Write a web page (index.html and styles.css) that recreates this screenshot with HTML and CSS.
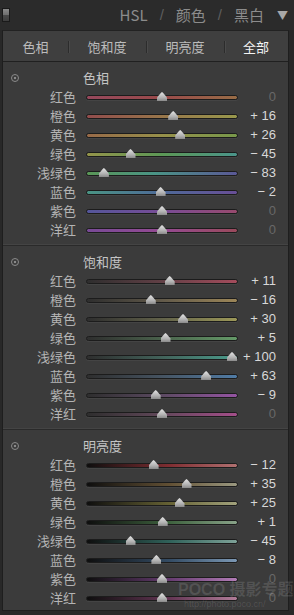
FILE: index.html
```html
<!DOCTYPE html>
<html lang="zh">
<head>
    <meta charset="UTF-8">
    <meta name="viewport" content="width=device-width, initial-scale=1.0">
    <title>HSL</title>
    <link rel="stylesheet" href="styles.css">
</head>
<body>
    <div class="header">
        <div class="toggle"></div>
        <div class="modes">
            <span>HSL</span><span class="slash">/</span><span>颜色</span><span class="slash">/</span><span>黑白</span><span class="arrow">▼</span>
        </div>
    </div>
    <div class="panel">
        <div class="tabs">
            <div class="tab">色相</div>
            <div class="tab">饱和度</div>
            <div class="tab">明亮度</div>
            <div class="tab active">全部</div>
        </div>

        <!-- 色相 -->
        <div class="section hue">
            <div class="title"><span class="target"></span><span class="name">色相</span></div>
            <div class="row"><span class="label">红色</span><div class="track t-red"><span class="thumb" style="--p:.5"></span></div><span class="value zero">0</span></div>
            <div class="row"><span class="label">橙色</span><div class="track t-orange"><span class="thumb" style="--p:.58"></span></div><span class="value">+ 16</span></div>
            <div class="row"><span class="label">黄色</span><div class="track t-yellow"><span class="thumb" style="--p:.63"></span></div><span class="value">+ 26</span></div>
            <div class="row"><span class="label">绿色</span><div class="track t-green"><span class="thumb" style="--p:.275"></span></div><span class="value">− 45</span></div>
            <div class="row"><span class="label">浅绿色</span><div class="track t-aqua"><span class="thumb" style="--p:.085"></span></div><span class="value">− 83</span></div>
            <div class="row"><span class="label">蓝色</span><div class="track t-blue"><span class="thumb" style="--p:.49"></span></div><span class="value">− 2</span></div>
            <div class="row"><span class="label">紫色</span><div class="track t-purple"><span class="thumb" style="--p:.5"></span></div><span class="value zero">0</span></div>
            <div class="row"><span class="label">洋红</span><div class="track t-magenta"><span class="thumb" style="--p:.5"></span></div><span class="value zero">0</span></div>
        </div>

        <!-- 饱和度 -->
        <div class="section sat">
            <div class="title"><span class="target"></span><span class="name">饱和度</span></div>
            <div class="row"><span class="label">红色</span><div class="track t-red"><span class="thumb" style="--p:.555"></span></div><span class="value">+ 11</span></div>
            <div class="row"><span class="label">橙色</span><div class="track t-orange"><span class="thumb" style="--p:.42"></span></div><span class="value">− 16</span></div>
            <div class="row"><span class="label">黄色</span><div class="track t-yellow"><span class="thumb" style="--p:.65"></span></div><span class="value">+ 30</span></div>
            <div class="row"><span class="label">绿色</span><div class="track t-green"><span class="thumb" style="--p:.525"></span></div><span class="value">+ 5</span></div>
            <div class="row"><span class="label">浅绿色</span><div class="track t-aqua"><span class="thumb" style="--p:1"></span></div><span class="value">+ 100</span></div>
            <div class="row"><span class="label">蓝色</span><div class="track t-blue"><span class="thumb" style="--p:.815"></span></div><span class="value">+ 63</span></div>
            <div class="row"><span class="label">紫色</span><div class="track t-purple"><span class="thumb" style="--p:.455"></span></div><span class="value">− 9</span></div>
            <div class="row"><span class="label">洋红</span><div class="track t-magenta"><span class="thumb" style="--p:.5"></span></div><span class="value zero">0</span></div>
        </div>

        <!-- 明亮度 -->
        <div class="section lum">
            <div class="title"><span class="target"></span><span class="name">明亮度</span></div>
            <div class="row"><span class="label">红色</span><div class="track t-red"><span class="thumb" style="--p:.44"></span></div><span class="value">− 12</span></div>
            <div class="row"><span class="label">橙色</span><div class="track t-orange"><span class="thumb" style="--p:.675"></span></div><span class="value">+ 35</span></div>
            <div class="row"><span class="label">黄色</span><div class="track t-yellow"><span class="thumb" style="--p:.625"></span></div><span class="value">+ 25</span></div>
            <div class="row"><span class="label">绿色</span><div class="track t-green"><span class="thumb" style="--p:.505"></span></div><span class="value">+ 1</span></div>
            <div class="row"><span class="label">浅绿色</span><div class="track t-aqua"><span class="thumb" style="--p:.275"></span></div><span class="value">− 45</span></div>
            <div class="row"><span class="label">蓝色</span><div class="track t-blue"><span class="thumb" style="--p:.46"></span></div><span class="value">− 8</span></div>
            <div class="row"><span class="label">紫色</span><div class="track t-purple"><span class="thumb" style="--p:.5"></span></div><span class="value zero">0</span></div>
            <div class="row"><span class="label">洋红</span><div class="track t-magenta"><span class="thumb" style="--p:.5"></span></div><span class="value zero">0</span></div>
        </div>
    </div>
    <div class="watermark">
        <div class="wm-big">POCO 摄影专题</div>
        <div class="wm-small">http://photo.poco.cn/</div>
    </div>
</body>
</html>
```

FILE: styles.css
```css
body {
    margin: 0;
    width: 294px;
    height: 615px;
    overflow: hidden;
    background-color: #282828;
    font-family: "Noto Sans CJK SC", "Noto Sans", sans-serif;
    position: relative;
}
.header {
    height: 30px;
    display: flex;
    align-items: center;
    justify-content: space-between;
    padding: 0 6px 0 2px;
    background-color: #2b2b2b;
}
.toggle {
    width: 8px;
    height: 14px;
    border: 1px solid #1a1a1a;
    box-sizing: border-box;
    background: linear-gradient(#8a8a8a 0, #6e6e6e 50%, #4a4a4a 50%, #3e3e3e 100%);
}
.modes {
    display: flex;
    align-items: center;
    color: #8c8c8c;
    font-size: 15px;
    line-height: 30px;
}
.modes .slash {
    color: #5e5e5e;
    margin: 0 12px;
    font-family: "Liberation Sans", sans-serif;
}
.modes .arrow {
    margin-left: 13px;
    font-size: 11px;
    color: #a8a8a8;
}
.panel {
    margin: 0 5px 0 2px;
    border: 1px solid #1e1e1e;
    border-top-color: #222;
    background-color: #3b3b3b;
}
.tabs {
    display: grid;
    grid-template-columns: 65px 78px 78px 1fr;
    height: 30px;
    background-color: #3f3f3f;
    border-bottom: 1px solid #202020;
}
.tab {
    display: flex;
    align-items: center;
    justify-content: center;
    color: #bcbcbc;
    font-size: 13px;
    position: relative;
}
.tab + .tab::before {
    content: "";
    position: absolute;
    left: 0;
    top: 10px;
    height: 12px;
    width: 1px;
    background-color: #2c2c2c;
    box-shadow: 1px 0 0 #4a4a4a;
}
.tab.active {
    color: #f4f4f4;
}
.section {
    padding: 6px 0 6px 0;
    border-bottom: 1px solid #2a2a2a;
    box-shadow: inset 0 -1px 0 #444;
}
.section.lum {
    padding-bottom: 3px;
    border-bottom: none;
    box-shadow: none;
}
.title {
    height: 19px;
    display: flex;
    align-items: center;
    color: #c4c4c4;
    font-size: 13px;
}
.target {
    width: 6px;
    height: 6px;
    margin-left: 8px;
    border: 1px solid #8a8a8a;
    border-radius: 50%;
    background: radial-gradient(circle, #8a8a8a 0, #8a8a8a 1.2px, transparent 1.6px);
}
.name {
    margin-left: 64px;
}
.row {
    display: grid;
    grid-template-columns: 73px 162px 38px;
    align-items: center;
    height: 19px;
}
.label {
    text-align: right;
    color: #b4b4b4;
    font-size: 13px;
    line-height: 19px;
}
.track {
    position: relative;
    margin-left: 10px;
    margin-top: 2px;
    height: 3px;
    border: 1px solid #1c1c1c;
    border-radius: 3px;
    box-shadow: 0 1px 0 #444;
}
.thumb {
    position: absolute;
    bottom: -2px;
    left: calc(5px + (100% - 10px) * var(--p));
    width: 10px;
    height: 9px;
    margin-left: -5px;
    background: linear-gradient(#e4e4e4, #b0b0b0 65%, #8a8a8a);
    clip-path: polygon(50% 0, 62% 12%, 100% 60%, 100% 100%, 0 100%, 0 60%, 38% 12%);
}
.value {
    text-align: right;
    color: #d8d8d8;
    font-family: "Liberation Sans", sans-serif;
    font-size: 13px;
    line-height: 19px;
}
.value.zero {
    color: #686868;
}

/* hue tracks */
.hue .t-red { background: linear-gradient(90deg, #96485c, #9a4a4a 50%, #986c46); }
.hue .t-orange { background: linear-gradient(90deg, #924c4c, #98764a 50%, #98984c); }
.hue .t-yellow { background: linear-gradient(90deg, #986a48, #96904a 50%, #78984a); }
.hue .t-green { background: linear-gradient(90deg, #94944a, #5c9856 50%, #4a948a); }
.hue .t-aqua { background: linear-gradient(90deg, #5a9656, #4a9486 45%, #5a5896); }
.hue .t-blue { background: linear-gradient(90deg, #4a9484, #4e6a98 50%, #684e96); }
.hue .t-purple { background: linear-gradient(90deg, #54569a, #784c96 50%, #984a6e); }
.hue .t-magenta { background: linear-gradient(90deg, #784a96, #944a92 50%, #9a4a5c); }

/* saturation tracks */
.sat .t-red { background: linear-gradient(90deg, #2e2e2e, #624046 50%, #a44c5c); }
.sat .t-orange { background: linear-gradient(90deg, #2e2e2e, #625a4a 50%, #9c8658); }
.sat .t-yellow { background: linear-gradient(90deg, #2e2e2e, #62624a 50%, #9c9858); }
.sat .t-green { background: linear-gradient(90deg, #2e2e2e, #4a624c 50%, #649a68); }
.sat .t-aqua { background: linear-gradient(90deg, #2e2e2e, #42625a 50%, #4a9c8c); }
.sat .t-blue { background: linear-gradient(90deg, #2e2e2e, #465462 50%, #507ca6); }
.sat .t-purple { background: linear-gradient(90deg, #2e2e2e, #5c4a62 50%, #9454a2); }
.sat .t-magenta { background: linear-gradient(90deg, #2e2e2e, #62485a 50%, #a44e8a); }

/* luminance tracks */
.lum .t-red { background: linear-gradient(90deg, #0e0e0e, #802e32 55%, #b07070); }
.lum .t-orange { background: linear-gradient(90deg, #0e0e0e, #625034 55%, #9a9880); }
.lum .t-yellow { background: linear-gradient(90deg, #0e0e0e, #666234 55%, #a2a27c); }
.lum .t-green { background: linear-gradient(90deg, #0e0e0e, #3e623e 55%, #88a288); }
.lum .t-aqua { background: linear-gradient(90deg, #0e0e0e, #30625a 55%, #7ea298); }
.lum .t-blue { background: linear-gradient(90deg, #0e0e0e, #344c64 55%, #7c98b4); }
.lum .t-purple { background: linear-gradient(90deg, #0e0e0e, #663c70 55%, #b27cb6); }
.lum .t-magenta { background: linear-gradient(90deg, #0e0e0e, #643654 55%, #b07c98); }

.watermark {
    position: absolute;
    left: 178px;
    top: 581px;
    color: rgba(255, 255, 255, 0.12);
    pointer-events: none;
    white-space: nowrap;
}
.wm-big {
    font-family: "Liberation Sans", "Noto Sans CJK SC", sans-serif;
    font-weight: bold;
    font-size: 16px;
    line-height: 18px;
}
.wm-small {
    font-family: "Liberation Sans", sans-serif;
    font-size: 9px;
    line-height: 10px;
    margin-left: 6px;
}
```
